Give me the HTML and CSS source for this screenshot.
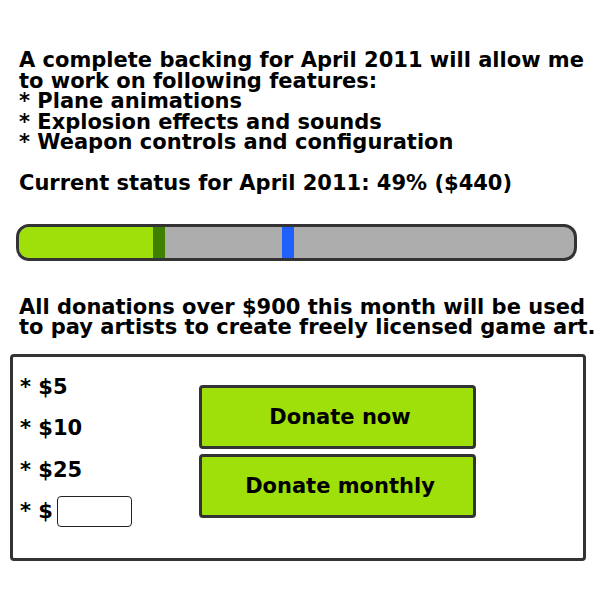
FILE: index.html
```html
<!DOCTYPE html>
<html lang="en">
<head>
  <meta charset="UTF-8" />
  <title>Donate</title>
  <link rel="stylesheet" href="styles.css">
</head>
<body>
  <div class="intro">
    A complete backing for April 2011 will allow me<br>
    to work on following features:<br>
    * Plane animations<br>
    * Explosion effects and sounds<br>
    * Weapon controls and configuration<br>
    <br>
    Current status for April 2011: 49% ($440)
  </div>

  <div class="progress">
    <div class="progress-fill"></div>
    <div class="progress-edge"></div>
    <div class="progress-marker"></div>
  </div>

  <div class="note">
    All donations over $900 this month will be used<br>
    to pay artists to create freely licensed game art.
  </div>

  <div class="donate-box">
    <div class="amounts">
      <div class="amount">* $5</div>
      <div class="amount">* $10</div>
      <div class="amount">* $25</div>
      <div class="amount">* $ <input class="custom-amount" type="text"></div>
    </div>
    <div class="buttons">
      <button class="donate-button">Donate now</button>
      <button class="donate-button">Donate monthly</button>
    </div>
  </div>
</body>
</html>
```

FILE: styles.css
```css
body {
  margin: 0;
  padding: 0;
  background: white;
  color: black;
  font-family: "DejaVu Sans", sans-serif;
  font-weight: bold;
  font-size: 21px;
  line-height: 20.5px;
}

.intro {
  padding: 50px 0 0 19px;
}

/* progress bar */
.progress {
  position: relative;
  margin: 30px 0 0 16px;
  width: 555px;
  height: 31px;
  border: 3px solid #333;
  border-radius: 13px;
  background: #adadad;
  overflow: hidden;
}

.progress-fill {
  width: 134px;
  height: 100%;
  background: #a0e00a;
}

.progress-edge {
  position: absolute;
  top: 0;
  left: 134px;
  width: 12px;
  height: 100%;
  background: #408000;
}

.progress-marker {
  position: absolute;
  top: 0;
  left: 263px;
  width: 12px;
  height: 100%;
  background: #2060ff;
}

.note {
  padding: 36px 0 0 19px;
}

/* donation box */
.donate-box {
  margin: 16px 0 0 10px;
  width: 570px;
  height: 201px;
  border: 3px solid #333;
  border-radius: 4px;
  display: flex;
}

.amounts {
  padding: 20px 0 0 7px;
  width: 179px;
  display: flex;
  flex-direction: column;
  gap: 21px;
}

.amount {
  display: flex;
  align-items: center;
  gap: 4px;
  height: 20.5px;
}

.custom-amount {
  width: 75px;
  height: 31px;
  box-sizing: border-box;
  border: 1.5px solid #222;
  border-radius: 4px;
  padding: 0;
  font: inherit;
}

.buttons {
  padding-top: 28px;
  display: flex;
  flex-direction: column;
  gap: 5px;
}

.donate-button {
  width: 277px;
  height: 64px;
  background: #a0e00a;
  border: 3px solid #333;
  border-radius: 4px;
  font-family: "DejaVu Sans", sans-serif;
  font-weight: bold;
  font-size: 21px;
  color: black;
  padding: 0 0 0 5px;
}
```
